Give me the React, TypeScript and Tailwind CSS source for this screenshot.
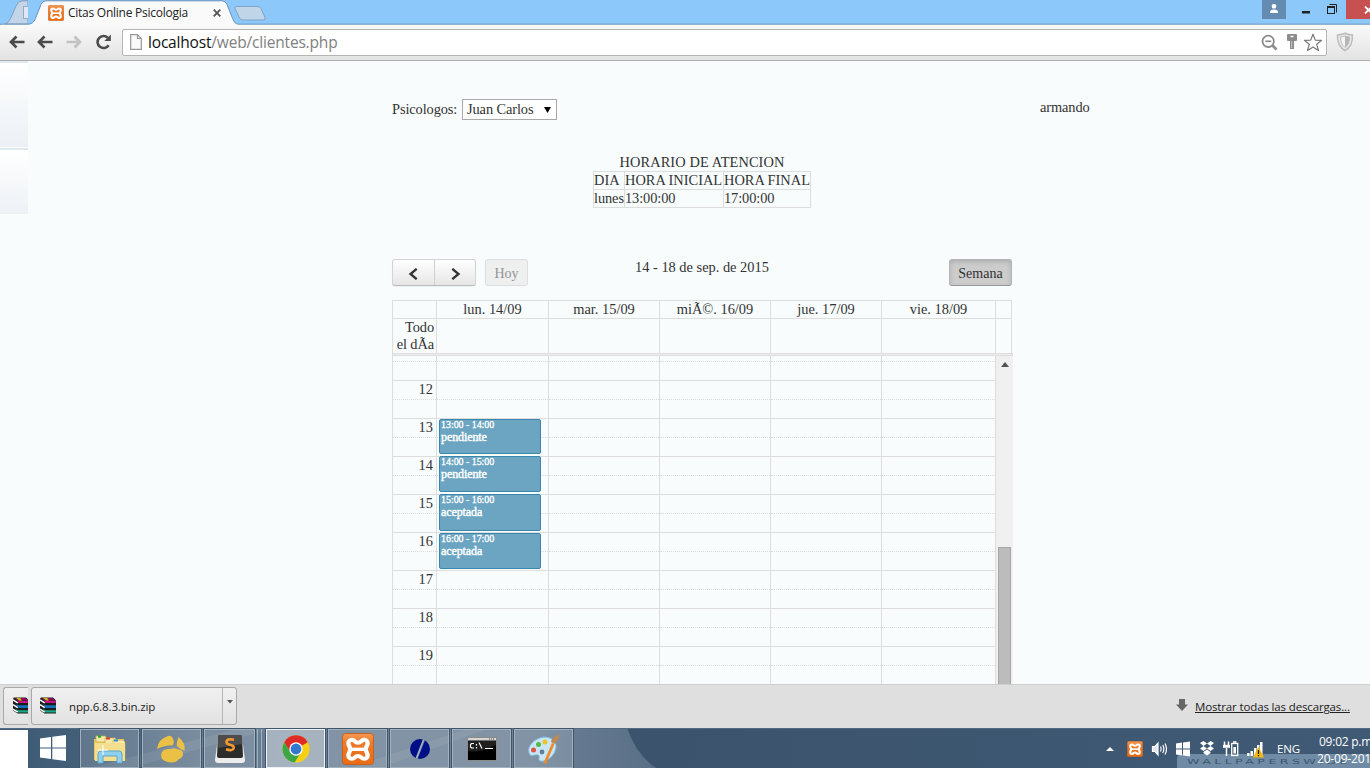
import React from "react";

const UI = "font-['Open_Sans','Noto_Sans',sans-serif]";

function Xampp({ size }: { size: number }) {
  return (
    <svg width={size} height={size} viewBox="0 0 32 32" className="shrink-0">
      <defs>
        <linearGradient id="xg" x1="0" y1="0" x2="0" y2="1">
          <stop offset="0" stopColor="#f59a55" />
          <stop offset=".3" stopColor="#ee7a28" />
          <stop offset="1" stopColor="#e86c14" />
        </linearGradient>
      </defs>
      <rect x=".5" y=".5" width="31" height="31" rx="3" fill="url(#xg)" stroke="#c9601c" />
      <g transform="translate(16 16.300) scale(1.200 1.120) translate(-16 -16)">
        <path
          d="M8 10.500a3 3 0 0 1 3-3c2.500 0 2 2.600 5 2.600s2.500-2.600 5-2.600a3 3 0 0 1 3 3c0 2.500-1.500 3-1.500 5.500s1.500 3 1.500 5.500a3 3 0 0 1-3 3c-2.500 0-2-2.600-5-2.600s-2.500 2.600-5 2.600a3 3 0 0 1-3-3c0-2.500 1.500-3 1.500-5.500s-1.500-3-1.500-5.500z"
          fill="none"
          stroke="#fff"
          strokeWidth="3.600"
        />
        <path d="M11 16h10" stroke="#fff" strokeWidth="3" />
      </g>
    </svg>
  );
}

function TabStrip() {
  return (
    <div className="relative flex h-6 w-full shrink-0 items-start bg-[#8dc8fb]">
      <svg className="absolute left-0 top-0" width="1370" height="25" viewBox="0 0 1370 25">
        <path d="M5 24C10 22 11 17 16 6Q18 .8 22 .8H28V24Z" fill="#c4d5e9" stroke="#7f9fc0" />
        <rect x="23.500" y="6.500" width="6" height="12" fill="#dfe8f3" stroke="#9aa9bb" />
        <rect x="28" y="0" width="20" height="24" fill="#8dc8fb" />
        <path d="M0 24.200H28C33 24 34.500 21 36 17L41 4.500Q42.500 .8 46 .8H222Q225.500 .8 227 4.500L232 17C234 22 235 24 239 24.200H1371V26H0Z" fill="#fafafa" stroke="#6491bb" />
        <path d="M235 8.500Q234 6.500 236.500 6.500H257Q260 6.500 261 8.500L265 17.500Q266 20 263 20H243Q240.500 20 239.500 18Z" fill="#c1d5e8" stroke="#7ea3c7" />
      </svg>
      <div className={`relative ml-12 flex h-[25px] items-center pt-px text-[12px] text-[#222] ${UI}`}>
        <Xampp size={16} />
        <span className="ml-1 w-[145px] whitespace-nowrap tracking-[-0.25px]">Citas Online Psicologia</span>
        <svg width="8" height="8" viewBox="0 0 8 8">
          <path d="M.7 .7L7.300 7.300M7.300 .7L.7 7.300" stroke="#555" strokeWidth="1.900" />
        </svg>
      </div>
      <div className="relative ml-auto flex">
        <div className="mr-[10px] flex h-[19px] w-6 items-center justify-center bg-[#648bb0]">
          <svg width="10" height="9" viewBox="0 0 10 9" fill="#fff" className="-mt-[3px]">
            <rect x="2.800" y="0" width="4.400" height="4.500" rx="1.500" />
            <path d="M1 8.500Q1 5.500 5 5.500T9 8.500V9H1Z" />
          </svg>
        </div>
        <svg width="50" height="19" viewBox="0 0 50 19">
          <path d="M6 11h8v2.500H6z" fill="#222" />
          <g fill="none" stroke="#222">
            <rect x="31.500" y="6.500" width="7" height="7" />
            <path d="M31 7.500h8M33.500 4.500h7v8" />
          </g>
        </svg>
        <div className="flex h-[19px] w-[24px] items-center overflow-hidden bg-[#c75050] pl-[18px]">
          <svg width="9" height="8" viewBox="0 0 9 8" className="shrink-0">
            <path d="M1 .5L8 7.500M8 .5L1 7.500" stroke="#fff" strokeWidth="1.800" />
          </svg>
        </div>
      </div>
    </div>
  );
}

function Arrow({ color, flip }: { color: string; flip?: boolean }) {
  return (
    <svg width="16" height="14" viewBox="0 0 16 14" className={flip ? "-scale-x-100" : ""}>
      <path d="M15.500 7H2.500M7.500 1.500L2 7l5.500 5.500" fill="none" stroke={color} strokeWidth="2.700" />
    </svg>
  );
}

function Toolbar() {
  return (
    <div className="flex h-[37px] w-full shrink-0 items-center border-b border-[#aeaeb0] bg-gradient-to-b from-[#fafafa] to-[#e3e3e3]">
      <div className="flex w-[122px] items-center pl-[9px]">
        <Arrow color="#4b4b4b" />
        <span className="w-3" />
        <Arrow color="#4b4b4b" />
        <span className="w-[13px]" />
        <Arrow color="#c2c2c2" flip />
        <svg width="17" height="16" viewBox="0 0 17 16" className="ml-[13px]">
          <path d="M13.600 11.200A6 6 0 1 1 12.800 3.800" fill="none" stroke="#4b4b4b" strokeWidth="2.600" />
          <path d="M15.800 .5V7H9.300Z" fill="#4b4b4b" />
        </svg>
      </div>
      <div className={`flex h-[27px] w-[1205px] items-center rounded-[2px] border border-[#b5b5b5] bg-white ${UI}`}>
        <svg width="12" height="16" viewBox="0 0 12 16" className="ml-[7px]">
          <path d="M.7 .7H7.500L11.300 4.500V15.300H.7ZM7.500 .7V4.500H11.300" fill="#fafafa" stroke="#979797" strokeWidth="1.200" />
        </svg>
        <span className="ml-[6px] whitespace-nowrap text-[15.500px] leading-[22px] tracking-[-0.18px] text-[#808080]">
          <span className="text-[#111]">localhost</span>/web/clientes.php
        </span>
        <div className="ml-auto flex items-center pr-[3px]">
          <svg width="17" height="17" viewBox="0 0 17 17" fill="none" stroke="#8c8c8c">
            <circle cx="7.200" cy="7.300" r="5.700" strokeWidth="1.800" />
            <path d="M4.300 7.300h6" strokeWidth="1.700" />
            <path d="M11.500 11.500L15.500 15.500" strokeWidth="2.600" />
          </svg>
          <svg width="10" height="16" viewBox="0 0 10 16" fill="#8c8c8c" className="ml-[9px]">
            <path d="M1 0H9Q10 0 10 1V6Q10 7 9 7H1Q0 7 0 6V1Q0 0 1 0ZM3.500 1.800V3.200H6.500V1.800Z" fillRule="evenodd" />
            <path d="M3 7H7V15H3Z" />
            <path d="M4.700 7V14" stroke="#c9c9c9" />
          </svg>
          <svg width="20" height="19" viewBox="0 0 20 19" className="ml-[6px]">
            <path d="M10 1.300L12.300 7.100L18.600 7.400L13.700 11.300L15.400 17.400L10 14L4.600 17.400L6.300 11.300L1.400 7.400L7.700 7.100Z" fill="#fff" stroke="#777" strokeWidth="1.200" strokeLinejoin="round" />
          </svg>
        </div>
      </div>
      <svg width="18" height="20" viewBox="0 0 18 20" className="ml-[9px]">
        <path d="M1.500 3Q5 3 9 1.200Q13 3 16.500 3Q17 14 9 18.700Q1 14 1.500 3Z" fill="#e9e9e9" stroke="#bdbdbd" strokeWidth="1.500" />
        <path d="M4.500 5Q7 5 9 4Q11 5 13.500 5Q13.500 12 9 15.500Q4.500 12 4.500 5Z" fill="#f6f6f6" stroke="#bdbdbd" />
        <path d="M9 4Q11 5 13.500 5Q13.500 12 9 15.500Z" fill="#b5b5b5" />
      </svg>
    </div>
  );
}

const HOURS = ["12", "13", "14", "15", "16", "17", "18", "19"];
const DAYS = ["lun. 14/09", "mar. 15/09", "miÃ©. 16/09", "jue. 17/09", "vie. 18/09"];
const COLS = "grid grid-cols-[44px_112px_111px_111px_111px_114px_17px]";

const EVENTS = [
  { time: "13:00 - 14:00", title: "pendiente", box: "top-[63px] h-[35px]" },
  { time: "14:00 - 15:00", title: "pendiente", box: "top-[100px] h-[36px]" },
  { time: "15:00 - 16:00", title: "aceptada", box: "top-[138px] h-[37px]" },
  { time: "16:00 - 17:00", title: "aceptada", box: "top-[177px] h-[36px]" },
];

function Calendar() {
  return (
    <div className="ml-[392px] mt-[13px] flex w-[621px] flex-col">
      <div className={`${COLS} h-[18px] w-[620px] border-r border-t border-[#ddd] text-center leading-[16px]`}>
        <div className="border-l border-[#ddd]" />
        {DAYS.map((d) => (
          <div key={d} className="border-l border-[#ddd]">{d}</div>
        ))}
        <div className="border-l border-[#ddd]" />
      </div>
      <div className={`${COLS} h-[35px] w-[620px] border-r border-t border-[#ddd]`}>
        <div className="border-l border-[#ddd] pr-[2px] text-right leading-[17px] tracking-[-0.1px]">
          Todo
          <br />
          el dÃa
        </div>
        {DAYS.map((d) => (
          <div key={d} className="border-l border-[#ddd]" />
        ))}
        <div className="border-l border-[#ddd]" />
      </div>
      <div className="h-[3px] border border-[#ddd] bg-[#eee]" />
      <div className="relative flex h-[328px] overflow-hidden">
        <div className="grid w-[604px] grid-cols-[44px_112px_111px_111px_111px_114px_1px]">
          {[0, 1, 2, 3, 4, 5].map((c) => (
            <div key={c} className="border-l border-[#ddd]">
              <div className="h-[5px]" />
              <div className="h-[19px] border-t border-dotted border-[#ddd]" />
              {HOURS.map((h) => (
                <div key={h}>
                  <div className="h-[19px] border-t border-[#ddd] pr-[3px] text-right leading-[16px]">
                    {c === 0 ? h : ""}
                  </div>
                  <div className="h-[19px] border-t border-dotted border-[#ddd]" />
                </div>
              ))}
            </div>
          ))}
          <div className="bg-[#ddd]" />
        </div>
        <div className="flex w-[17px] flex-col items-center bg-[#f1f0f1]">
          <svg width="8" height="5" viewBox="0 0 8 5" className="mt-[6px] shrink-0">
            <path d="M4 0L8 5H0Z" fill="#505050" />
          </svg>
          <div className="mt-[180px] h-[160px] w-[13px] shrink-0 border border-[#a8a5a6] bg-[#bcbcbc]" />
        </div>
        {EVENTS.map((e) => (
          <div
            key={e.time}
            className={`absolute left-[47px] w-[102px] overflow-hidden rounded-[2px] border border-[#3a87ad] bg-[#6ba5c2] pl-px text-white ${e.box}`}
          >
            <div className="h-[11px] text-[10px] leading-[10px] tracking-[-0.05px] [-webkit-text-stroke:0.3px_white]">
              {e.time}
            </div>
            <div className="text-[12px] leading-[13px] tracking-[-0.1px] [-webkit-text-stroke:0.4px_white]">
              {e.title}
            </div>
          </div>
        ))}
      </div>
    </div>
  );
}

function Page() {
  return (
    <div className="flex h-[623px] w-full shrink-0 overflow-hidden bg-[#f8fcfd] font-['Liberation_Serif',serif] text-[14.400px] text-[#333]">
      <div className="-mr-7 w-7 shrink-0">
        <div className="h-[2px] bg-[#e0eaee]" />
        <div className="h-[84px] bg-gradient-to-b from-white to-[#ebf0f5]" />
        <div className="h-px bg-white" />
        <div className="h-[2px] bg-[#e0eaee]" />
        <div className="h-[64px] bg-gradient-to-b from-white to-[#edf1f6]" />
      </div>
      <div className="flex w-full flex-col">
        <div className="flex h-[59px] items-start pl-[392px] pt-[38px] tracking-[-0.1px]">
          <span className="w-[70px] leading-[21px]">Psicologos:</span>
          <div className="flex h-[21px] w-[95px] items-center border border-[#a9a9a9] bg-white pl-[4px]">
            <span className="whitespace-nowrap">Juan Carlos</span>
            <svg width="7" height="6" viewBox="0 0 7 6" className="ml-auto mr-[5px]">
              <path d="M0 0H7L3.500 6Z" fill="#000" />
            </svg>
          </div>
          <span className="ml-[483px] leading-[17px]">armando</span>
        </div>
        <div className="ml-[593px] mt-[33px] w-[218px]">
          <div className="h-[17px] text-center leading-[18px] tracking-[0.1px]">HORARIO DE ATENCION</div>
          <div className="mt-px grid h-[37px] grid-cols-[31px_99px_88px] grid-rows-[18px_19px] whitespace-nowrap leading-[17px]">
            {["DIA", "HORA INICIAL", "HORA FINAL", "lunes", "13:00:00", "17:00:00"].map((t, i) => (
              <div
                key={t}
                className={`border-l border-t border-[#ddd] ${i % 3 === 2 ? "border-r" : ""} ${i > 2 ? "border-b tracking-[-0.1px]" : ""}`}
              >
                {t}
              </div>
            ))}
          </div>
        </div>
        <div className="ml-[392px] mt-[51px] flex h-7 w-[620px] items-start">
          <div className="flex h-[27px] w-[84px] rounded-[3px] border border-[#d4d4d4] border-b-[#bbb] bg-gradient-to-b from-white to-[#e6e6e6] shadow-[0_1px_1px_rgba(0,0,0,0.06)]">
            <div className="flex w-[42px] items-center justify-center border-r border-[#d0d0d0]">
              <svg width="10" height="12" viewBox="0 0 10 12" className="mr-px mt-[3px]">
                <path d="M8.700 .8L2.500 6L8.700 11.200" fill="none" stroke="#333" strokeWidth="2.300" />
              </svg>
            </div>
            <div className="flex flex-1 items-center justify-center">
              <svg width="10" height="12" viewBox="0 0 10 12" className="ml-px mt-[3px]">
                <path d="M1.300 .8L7.500 6L1.300 11.200" fill="none" stroke="#333" strokeWidth="2.300" />
              </svg>
            </div>
          </div>
          <div className="ml-[9px] h-[27px] w-[43px] rounded-[3px] border border-[#dcdedf] bg-[#eeefef] text-center text-[14px] leading-[27px] text-[#929494]">
            Hoy
          </div>
          <div className="flex-1 pl-[107px] leading-[17px]">14 - 18 de sep. de 2015</div>
          <div className="h-[27px] w-[63px] rounded-[3px] border border-[#b5b5b5] border-b-[#999] bg-[#ccc] text-center text-[14px] leading-[27px] shadow-[inset_0_2px_4px_rgba(0,0,0,0.15)]">
            Semana
          </div>
        </div>
        <Calendar />
      </div>
    </div>
  );
}

function Rar() {
  return (
    <svg width="17" height="17" viewBox="0 0 17 17" className="-mt-[2px] shrink-0">
      <path d="M0 1.500L1 .5H13L16 3.500V16.500H4.500L0 13.500Z" fill="#1c1c1c" />
      <path d="M1.500 1H12.500L15.500 3.700H4.500Z" fill="#8d0a58" />
      <path d="M5 4H16V6H5Z" fill="#c01280" />
      <path d="M2.500 7L5.500 8.300H16V11H5.500Z" fill="#1670b8" />
      <path d="M2.500 11.800L5.500 13.300H16V15.500H5.500Z" fill="#1ba580" />
      <path d="M0 2.800L4.700 5.800M0 7.600L4.700 10.600M0 12.200L4.700 15.200" stroke="#fff" strokeWidth="1.500" />
      <path d="M3 .8H7L9 3.500H6Z" fill="#c9b820" />
    </svg>
  );
}

function Downloads() {
  return (
    <div className={`flex h-11 w-full shrink-0 items-start border-t border-[#cfcfcf] bg-[#dfdfdf] pt-[2px] text-[12px] text-[#222] ${UI}`}>
      <div className="ml-[3px] flex h-[38px] w-[25px] items-center overflow-hidden rounded-l-[3px] border border-r-0 border-[#a9a9a9] bg-gradient-to-b from-[#f0f0f0] to-[#e2e2e2] pl-[9px]">
        <Rar />
      </div>
      <div className="ml-[3px] flex h-[38px] w-[206px] items-center rounded-[3px] border border-[#a9a9a9] bg-gradient-to-b from-[#f0f0f0] to-[#e2e2e2] pl-[8px]">
        <Rar />
        <span className="ml-3 pt-[2px] text-[11.500px] tracking-[-0.12px]">npp.6.8.3.bin.zip</span>
        <div className="ml-auto flex h-full w-[14px] justify-center border-l border-[#b5b5b5] pt-[12px]">
          <svg width="6" height="4" viewBox="0 0 6 4">
            <path d="M0 0H6L3 3.500Z" fill="#555" />
          </svg>
        </div>
      </div>
      <div className="ml-auto mr-[20px] flex h-[38px] items-center">
        <svg width="12" height="12" viewBox="0 0 12 12" className="-mt-[2px] mr-[7px]">
          <path d="M3 0H9V5.500H12L6 12L0 5.500H3Z" fill="#666" />
        </svg>
        <span className="w-[155px] whitespace-nowrap pt-[2px] text-[11.500px] tracking-[-0.14px] underline">
          Mostrar todas las descargas...
        </span>
      </div>
    </div>
  );
}

function TaskButton({ children, active }: { children: React.ReactNode; active?: boolean }) {
  return (
    <div
      className={`flex h-[39px] w-[59px] shrink-0 items-center justify-center border outline outline-1 outline-[#40566b] ${
        active ? "border-[#eef1f4] bg-white/40" : "border-[#a3b1be] bg-white/15"
      }`}
    >
      {children}
    </div>
  );
}

function Taskbar() {
  return (
    <div className="relative flex h-10 w-full shrink-0 overflow-hidden bg-[#3c5670]">
      <svg className="absolute left-0 top-0" width="1370" height="40" viewBox="0 0 1370 40">
        <defs>
          <linearGradient id="tb" x1="0" x2="1">
            <stop offset="0" stopColor="#3d5b76" />
            <stop offset=".12" stopColor="#435e78" />
            <stop offset=".3" stopColor="#62788e" />
            <stop offset=".45" stopColor="#6b8095" />
            <stop offset=".8" stopColor="#6c8196" />
            <stop offset="1" stopColor="#596f86" />
          </linearGradient>
          <linearGradient id="td" x1="0" x2="1">
            <stop offset="0" stopColor="#374d65" />
            <stop offset="1" stopColor="#405a75" />
          </linearGradient>
        </defs>
        <rect width="1370" height="40" fill="url(#td)" />
        <path d="M0 0H627Q637 28 656 40H0Z" fill="url(#tb)" />
        <path d="M90 40L240 0H275L130 40ZM350 40L470 0H490L380 40Z" fill="#fff" opacity=".07" />
        <path d="M1177 40V31Q1177 26 1182 26H1370V40Z" fill="#6f8ba5" />
        <rect width="1370" height="1" fill="#526b82" />
      </svg>
      <div className="absolute left-[1187px] top-[29px] h-[11px] w-[183px] overflow-hidden">
        <div className="w-max origin-left scale-x-[1.8] whitespace-nowrap font-['DejaVu_Sans',sans-serif] text-[7px] leading-[10px] tracking-[1.9px] text-[#3c5670]">
          WALLPAPERSWIDE
        </div>
      </div>
      <div className="relative mt-[2px] h-[38px] w-7 shrink-0 bg-white" />
      <div className="relative flex w-[52px] shrink-0 pl-3 pt-[7px]">
        <svg width="26" height="26" viewBox="0 0 26 26" fill="#fff">
          <path d="M0 3.600L11 2V12.400H0ZM12.300 1.800L26 0V12.400H12.300ZM0 13.600H11V24L0 22.400ZM12.300 13.600H26V26L12.300 24.200Z" />
        </svg>
      </div>
      <div className="relative mt-px flex gap-[3px]">
        <TaskButton>
          <svg width="34" height="30" viewBox="0 0 34 30">
            <path d="M1 5H31V26H1Z" fill="#e9c95f" />
            <path d="M3 2H12L14 4V8H3Z" fill="#f6e8a8" stroke="#cba947" strokeWidth=".7" />
            <path d="M12 4H22L24 6V10H12Z" fill="#f6e8a8" stroke="#cba947" strokeWidth=".7" />
            <path d="M20 6H30L32 8V26H20Z" fill="#f6e8a8" stroke="#cba947" strokeWidth=".7" />
            <path d="M5 2.500h3" stroke="#1fa838" strokeWidth="2.500" />
            <path d="M13 4.500h4" stroke="#d8402a" strokeWidth="2" />
            <path d="M21 6.500h4" stroke="#2990d8" strokeWidth="2" />
            <path d="M2 9H32V27H2Z" fill="#f3df8d" />
            <path d="M5 29V20Q5 17 8 17H26Q29 17 29 20V29H24V22H10V29Z" fill="#8fd0ee" stroke="#5aa7cf" />
            <path d="M10 11v10M5 16h10" stroke="#fff" strokeWidth="1" />
          </svg>
        </TaskButton>
        <TaskButton>
          <svg width="30" height="28" viewBox="0 0 30 28" fill="#eac045">
            <path d="M0 14Q1 4 11 1Q15 0 16.500 5Q17.500 10 15 10.500Q8 10 0 14Z" />
            <path d="M21.500 2Q29 8 27.500 16Q24 15 20 11Q19 9 21.500 2Z" />
            <path d="M4 20Q5 13 13 14Q18 12.500 20 14Q27 15 26 20Q25 23 22 24Q19 28 14 27.500Q4 27 4 20Z" />
          </svg>
        </TaskButton>
        <div className="flex gap-[3px]">
          <div className="flex h-[39px] w-[51px] items-center justify-center border border-[#a3b1be] bg-white/15 outline outline-1 outline-[#40566b]">
            <svg width="32" height="30" viewBox="0 0 32 30">
              <path d="M4 3H28L31 26Q31 29 28 29H4Q1 29 1 26Z" fill="#ececec" />
              <path d="M6 1H26Q28 1 28 3L29 22Q29 24 27 24H5Q3 24 3 22L4 3Q4 1 6 1Z" fill="#2c2c2c" />
              <path d="M6 1H26Q28 1 28 3L28.400 10L3.700 14L4 3Q4 1 6 1Z" fill="#4c4c4c" />
              <path d="M20 5.700Q12.500 4 12.500 8Q12.700 10.300 16 10.800Q20 11.500 19.700 14Q19 17.500 12 15.300" fill="none" stroke="#f59a32" strokeWidth="2.600" />
            </svg>
          </div>
          <div className="-ml-px w-px bg-[#a3b1be]" />
          <div className="mr-px w-px bg-[#a3b1be]" />
        </div>
        <TaskButton active>
          <svg width="28" height="28" viewBox="0 0 30 30">
            <circle cx="15" cy="15" r="14.500" fill="#f9cf16" />
            <path d="M15 15L27.600 7.700A14.500 14.500 0 0 0 2.400 7.700L8.500 18Z" fill="#df2a26" />
            <path d="M2.400 7.700A14.500 14.500 0 0 0 13.500 29.400L20 19L15 21L9 18Z" fill="#3fa648" />
            <circle cx="15" cy="15" r="7.200" fill="#fff" />
            <circle cx="15" cy="15" r="5.800" fill="#3378cf" />
          </svg>
        </TaskButton>
        <TaskButton>
          <Xampp size={32} />
        </TaskButton>
        <TaskButton>
          <svg width="22" height="22" viewBox="0 0 22 22">
            <circle cx="11" cy="11" r="10" fill="#000f86" />
            <path d="M15.500 0L7 22" stroke="#8094a7" strokeWidth="2.200" />
            <path d="M14.600 2L7.500 20" stroke="#c3ccd5" strokeWidth=".7" />
          </svg>
        </TaskButton>
        <TaskButton>
          <svg width="30" height="24" viewBox="0 0 30 24">
            <rect x=".5" y=".5" width="29" height="23" fill="#000" stroke="#8b8b8b" />
            <rect x="1" y="1" width="28" height="2.500" fill="#d5d5d5" />
            <path d="M22 2h6" stroke="#444" strokeDasharray="1 1" />
            <path d="M1 4H29V8Q15 16 1 14Z" fill="#fff" opacity=".12" />
            <path d="M7 6.500H4.500L3.500 7.500V10L4.500 11H7M9.500 7v1.500M9.500 10v1.500M12 5.500L15 11.500M18 11.500h8" fill="none" stroke="#fff" strokeWidth="1.200" />
          </svg>
        </TaskButton>
        <TaskButton>
          <svg width="32" height="32" viewBox="0 0 32 32">
            <path d="M1 20Q-1 14 6 8Q14 2 22 5Q29 8 28 15Q26 25 16 28Q10 29 11 25Q12 21 7 22Q2 24 1 20Z" fill="#c9e6f6" stroke="#7db8da" />
            <circle cx="5.500" cy="17" r="2.500" fill="#e05545" />
            <circle cx="10.500" cy="11.500" r="2.500" fill="#54b848" />
            <circle cx="17" cy="9" r="2.500" fill="#efc32c" />
            <circle cx="14" cy="19" r="2.400" fill="#5f7f9a" />
            <path d="M24 10L26.500 11L18 31L15.500 30Z" fill="#ee8a2a" />
            <path d="M23 9Q23 5 31 1Q32 6 27 11Z" fill="#b98a58" />
          </svg>
        </TaskButton>
      </div>
      <div className={`relative ml-auto flex items-start text-[12px] text-white ${UI}`}>
        <svg width="160" height="20" viewBox="0 0 160 20" className="mt-[11px] shrink-0">
          <path d="M3 12L7 8L11 12Z" fill="#fff" />
          <g transform="translate(24 2)">
            <Xampp size={16} />
          </g>
          <g stroke="#fff" fill="none" strokeWidth="1.200">
            <path d="M49.500 7.500H52L55 4V16L52 12.500H49.500Z" fill="#dfe6ec" />
            <path d="M57.500 7.500Q59 10 57.500 12.500M59.700 6Q62 10 59.700 14M62 4.500Q65 10 62 15.500" />
          </g>
          <path d="M73 4.500L79 3.600V9.500H73ZM80 3.400L87 2.400V9.500H80ZM73 10.500H79V16.400L73 15.500ZM80 10.500H87V17.600L80 16.600Z" fill="#fff" />
          <path d="M97 4L100.500 2L104 4.500L100.500 7ZM104 4.500L107.500 2L111 4L107.500 7ZM97 9.500L100.500 7L104 9.500L100.500 12ZM104 9.500L107.500 7L111 9.500L107.500 12ZM100.500 13L104 10.500L107.500 13V14L104 16.500L100.500 14Z" fill="#fff" />
          <g fill="none" stroke="#fff">
            <rect x="128.700" y="4.500" width="6" height="12" strokeWidth="1.300" />
            <path d="M130 3h3.500" strokeWidth="1.600" />
            <path d="M131.700 8v6.500" strokeWidth="2.600" />
            <path d="M121.500 2.500v4M125.500 2.500v4M123.500 9v8" strokeWidth="1.500" />
            <path d="M120 7.300h7" strokeWidth="3" />
          </g>
          <path d="M144 14h2.500v3h-2.500zM147.500 12h2.500v5h-2.500zM151 9h2.500v8h-2.500zM154 6h2.500v11h-2.500zM157 3h2.500v14h-2.500z" fill="#fff" />
        </svg>
        <svg width="12" height="12" viewBox="0 0 12 12" className="-ml-[11px] mt-[18px] shrink-0">
          <path d="M6.500 .5L12 11.500H1Z" fill="#f6b80c" />
          <path d="M6.500 4v4M6.500 9v1.300" stroke="#222" strokeWidth="1.300" />
        </svg>
        <span className="ml-[13px] mt-[12px] w-10 text-[11.500px] leading-[18px] tracking-[-0.1px]">ENG</span>
        <div className="mt-[5px] w-[53px] whitespace-nowrap text-[12px] leading-[17px]">
          <div className="pl-[2px] tracking-[-0.25px]">09:02 p.m.</div>
          <div className="tracking-[-0.2px]">20-09-2015</div>
        </div>
      </div>
    </div>
  );
}

export default function App() {
  return (
    <div className="flex h-[768px] w-[1370px] flex-col overflow-hidden">
      <TabStrip />
      <Toolbar />
      <Page />
      <Downloads />
      <Taskbar />
    </div>
  );
}
